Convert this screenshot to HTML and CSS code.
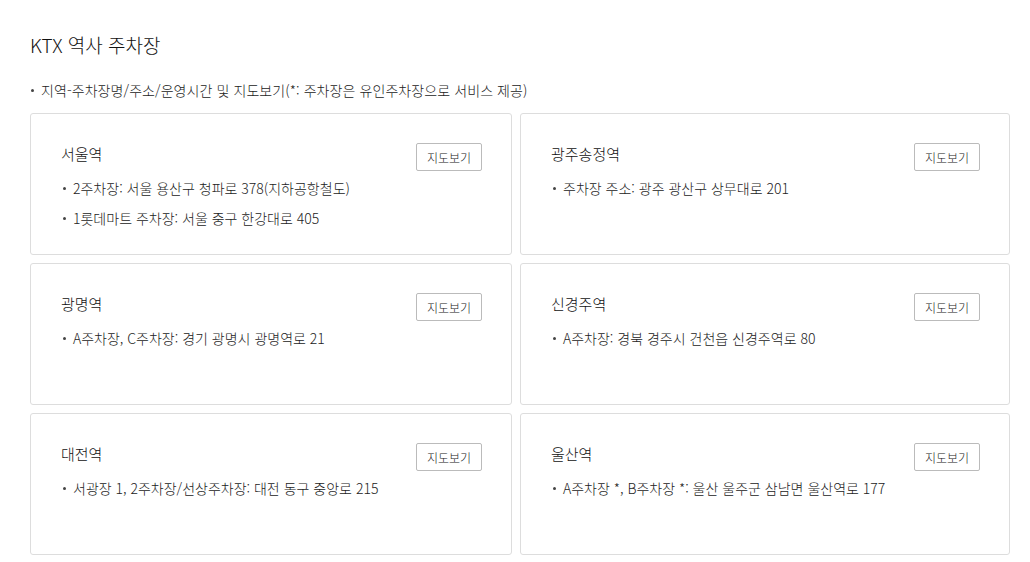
FILE: index.html
```html
<!DOCTYPE html>
<html lang="ko">
<head>
  <meta charset="UTF-8">
  <meta name="viewport" content="width=device-width, initial-scale=1.0">
  <title>KTX 역사 주차장</title>
  <link rel="stylesheet" href="styles.css">
</head>
<body>
  <div class="parking">
    <h2 class="parking-title">KTX 역사 주차장</h2>
    <p class="parking-note">지역-주차장명/주소/운영시간 및 지도보기(*: 주차장은 유인주차장으로 서비스 제공)</p>

    <!-- 역사별 카드 -->
    <div class="station-grid">
      <div class="station-card">
        <div class="station-head">
          <h3>서울역</h3>
          <button class="map-btn">지도보기</button>
        </div>
        <ul class="lot-list">
          <li>2주차장: 서울 용산구 청파로 378(지하공항철도)</li>
          <li>1롯데마트 주차장: 서울 중구 한강대로 405</li>
        </ul>
      </div>
      <div class="station-card">
        <div class="station-head">
          <h3>광주송정역</h3>
          <button class="map-btn">지도보기</button>
        </div>
        <ul class="lot-list">
          <li>주차장 주소: 광주 광산구 상무대로 201</li>
        </ul>
      </div>
      <div class="station-card">
        <div class="station-head">
          <h3>광명역</h3>
          <button class="map-btn">지도보기</button>
        </div>
        <ul class="lot-list">
          <li>A주차장, C주차장: 경기 광명시 광명역로 21</li>
        </ul>
      </div>
      <div class="station-card">
        <div class="station-head">
          <h3>신경주역</h3>
          <button class="map-btn">지도보기</button>
        </div>
        <ul class="lot-list">
          <li>A주차장: 경북 경주시 건천읍 신경주역로 80</li>
        </ul>
      </div>
      <div class="station-card">
        <div class="station-head">
          <h3>대전역</h3>
          <button class="map-btn">지도보기</button>
        </div>
        <ul class="lot-list">
          <li>서광장 1, 2주차장/선상주차장: 대전 동구 중앙로 215</li>
        </ul>
      </div>
      <div class="station-card">
        <div class="station-head">
          <h3>울산역</h3>
          <button class="map-btn">지도보기</button>
        </div>
        <ul class="lot-list">
          <li>A주차장 *, B주차장 *: 울산 울주군 삼남면 울산역로 177</li>
        </ul>
      </div>
    </div>
  </div>
</body>
</html>
```

FILE: styles.css
```css
body {
  margin: 0;
  background: #fff;
  color: #111;
  font-family: 'Noto Sans CJK KR', 'Noto Sans', sans-serif;
  font-weight: 300;
}

.parking {
  padding: 30px 20px 0 30px;
}

.parking-title {
  margin: 0;
  font-size: 19px;
  font-weight: 300;
  line-height: 30px;
  color: #111;
}

.parking-note {
  position: relative;
  margin: 20px 0 13px;
  padding-left: 11px;
  font-size: 14px;
  line-height: 20px;
  letter-spacing: 0.08px;
  color: #222;
}

.parking-note::before,
.lot-list li::before {
  content: '';
  position: absolute;
  left: 1px;
  top: 9px;
  width: 3px;
  height: 3px;
  border-radius: 50%;
  background: #444;
}

.station-grid {
  display: grid;
  grid-template-columns: 482px 490px;
  grid-auto-rows: 142px;
  gap: 8px;
}

.station-card {
  box-sizing: border-box;
  padding: 29px 29px 0 30px;
  border: 1px solid #ddd;
  border-radius: 3px;
}

.station-head {
  display: flex;
  justify-content: space-between;
  align-items: flex-start;
}

.station-head h3 {
  margin: 0;
  font-size: 15px;
  font-weight: 300;
  line-height: 22px;
  color: #111;
}

.map-btn {
  box-sizing: border-box;
  width: 66px;
  height: 28px;
  padding: 0;
  border: 1px solid #bbb;
  border-radius: 2px;
  background: #fff;
  font-family: inherit;
  font-weight: 300;
  font-size: 12px;
  color: #222;
  cursor: pointer;
}

.lot-list {
  margin: 2px 0 0;
  padding: 0;
  list-style: none;
}

.lot-list li {
  position: relative;
  padding-left: 12px;
  font-size: 14px;
  line-height: 30px;
  color: #222;
}

.lot-list li::before {
  left: 2px;
  top: 14px;
}
```
